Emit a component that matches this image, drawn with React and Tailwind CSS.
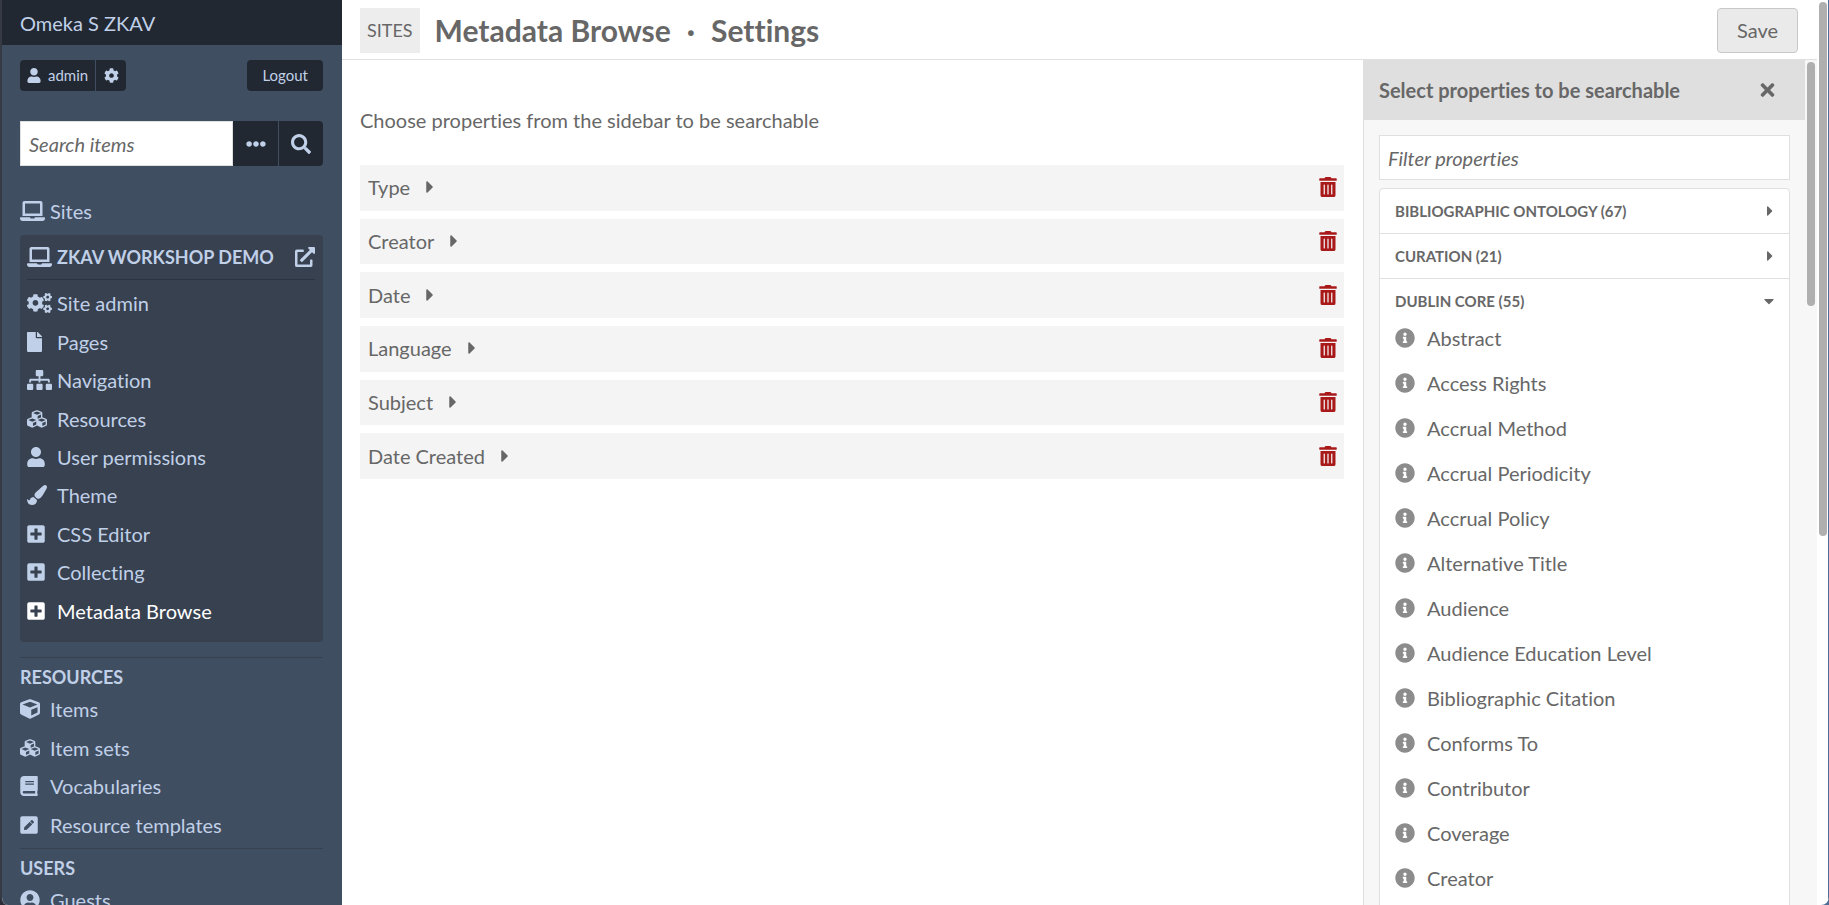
import React, { useState } from "react";
import {
  FaBook,
  FaCaretDown,
  FaCaretRight,
  FaCog,
  FaCogs,
  FaCube,
  FaCubes,
  FaEllipsisH,
  FaExternalLinkAlt,
  FaFile,
  FaInfoCircle,
  FaLaptop,
  FaPaintBrush,
  FaPenSquare,
  FaPlusSquare,
  FaSearch,
  FaSitemap,
  FaTimes,
  FaTrashAlt,
  FaUser,
  FaUserCircle,
} from "react-icons/fa";

const siteLinks = [
  { label: "Site admin", icon: FaCogs, width: "w-[25px]" },
  { label: "Pages", icon: FaFile, width: "w-[15px]" },
  { label: "Navigation", icon: FaSitemap, width: "w-[25px]" },
  { label: "Resources", icon: FaCubes, width: "w-5" },
  { label: "User permissions", icon: FaUser, width: "w-[18px]" },
  { label: "Theme", icon: FaPaintBrush, width: "w-5" },
  { label: "CSS Editor", icon: FaPlusSquare, width: "w-[18px]" },
  { label: "Collecting", icon: FaPlusSquare, width: "w-[18px]" },
  {
    label: "Metadata Browse",
    icon: FaPlusSquare,
    width: "w-[18px]",
    active: true,
  },
];

const resourceLinks = [
  { label: "Items", icon: FaCube, width: "w-5" },
  { label: "Item sets", icon: FaCubes, width: "w-5" },
  { label: "Vocabularies", icon: FaBook, width: "w-[18px]" },
  { label: "Resource templates", icon: FaPenSquare, width: "w-[18px]" },
];

const selectedProperties = [
  "Type",
  "Creator",
  "Date",
  "Language",
  "Subject",
  "Date Created",
];

const dublinCore = [
  "Abstract",
  "Access Rights",
  "Accrual Method",
  "Accrual Periodicity",
  "Accrual Policy",
  "Alternative Title",
  "Audience",
  "Audience Education Level",
  "Bibliographic Citation",
  "Conforms To",
  "Contributor",
  "Coverage",
  "Creator",
];

const vocabularies = [
  { label: "Bibliographic Ontology", count: 67, terms: [] },
  { label: "Curation", count: 21, terms: [] },
  { label: "Dublin Core", count: 55, terms: dublinCore },
];

function NavLink({ label, icon: Icon, width, active }) {
  return (
    <li className="flex flex-1 items-center">
      <a
        href="#"
        className={`flex items-center ${active ? "text-white" : ""}`}
      >
        <span className="w-[30px]">
          <Icon className={`h-5 ${width}`} />
        </span>
        {label}
      </a>
    </li>
  );
}

function Navigation() {
  return (
    <nav className="flex w-[340px] shrink-0 flex-col overflow-hidden bg-[#404e61] text-[#c0d0e8]">
      <div className="flex h-[45px] shrink-0 items-center bg-[#222831] px-[18px]">
        <a href="#">Omeka S ZKAV</a>
      </div>

      <div className="pt-[15px] pr-[19px] pl-[18px]">
        <div className="flex justify-between text-[15px] leading-[31px]">
          <div className="flex gap-px">
            <a
              href="#"
              className="flex items-center gap-[7px] rounded-l bg-[#222831] px-[7px]"
            >
              <FaUser className="h-[15px] w-[14px]" />
              admin
            </a>
            <a
              href="#"
              aria-label="Settings"
              className="flex w-[30px] items-center justify-center rounded-r bg-[#222831]"
            >
              <FaCog className="size-[15px]" />
            </a>
          </div>
          <a href="#" className="rounded bg-[#222831] px-[15px]">
            Logout
          </a>
        </div>

        <form className="mt-[30px] flex h-[45px]">
          <input
            type="text"
            aria-label="Search items"
            placeholder="Search items"
            className="min-w-0 flex-1 border border-[#dfdfdf] bg-white px-2 text-[#676767] italic placeholder:text-[#676767]"
          />
          <button
            type="button"
            aria-label="Advanced search"
            className="flex w-[46px] items-center justify-center border-r border-[#404e61] bg-[#222831]"
          >
            <FaEllipsisH className="size-5" />
          </button>
          <button
            type="button"
            aria-label="Search"
            className="flex w-11 items-center justify-center rounded-r bg-[#222831]"
          >
            <FaSearch className="size-5" />
          </button>
        </form>

        <a href="#" className="mt-[30px] flex items-center leading-[30px]">
          <span className="w-[30px]">
            <FaLaptop className="h-5 w-[25px]" />
          </span>
          Sites
        </a>

        <div className="mt-[9px] rounded bg-[#37414f] pr-2 pb-3 pl-[7px]">
          <div className="flex h-[45px] items-center border-b border-[#2b3441] text-[18px] font-bold">
            <span className="w-[30px]">
              <FaLaptop className="h-5 w-[25px]" />
            </span>
            <a href="#" className="flex-1 whitespace-nowrap uppercase">
              ZKAV Workshop Demo
            </a>
            <a href="#" aria-label="View site">
              <FaExternalLinkAlt className="size-5" />
            </a>
          </div>
          <ul className="mt-1 flex h-[346px] flex-col">
            {siteLinks.map((link) => (
              <NavLink key={link.label} {...link} />
            ))}
          </ul>
        </div>

        <h4 className="mt-[15px] border-t border-[#37414f] pt-[7px] text-[18px] leading-[25px] font-bold uppercase">
          Resources
        </h4>
        <ul className="flex h-[154px] flex-col">
          {resourceLinks.map((link) => (
            <NavLink key={link.label} {...link} />
          ))}
        </ul>

        <h4 className="mt-1 border-t border-[#37414f] pt-[7px] text-[18px] leading-[25px] font-bold uppercase">
          Users
        </h4>
        <ul className="flex h-[38px] flex-col">
          <NavLink label="Guests" icon={FaUserCircle} width="w-5" />
        </ul>
      </div>
    </nav>
  );
}

function SelectedProperty({ label }) {
  return (
    <li className="flex flex-1 items-center justify-between bg-[#f4f4f4] pr-[7px] pb-px pl-2">
      <button type="button" className="flex items-center gap-4">
        {label}
        <FaCaretRight className="h-5 w-2" />
      </button>
      <button
        type="button"
        aria-label={`Remove ${label}`}
        className="text-[#a91919]"
      >
        <FaTrashAlt className="h-5 w-[18px]" />
      </button>
    </li>
  );
}

function Vocabulary({ label, count, terms }) {
  const [open, setOpen] = useState(terms.length > 0);

  return (
    <li className="border-b border-[#dfdfdf] px-[15px] last:border-b-0">
      <button
        type="button"
        onClick={() => setOpen(!open)}
        className="flex h-11 w-full items-center justify-between text-[15px] font-bold uppercase"
      >
        {label} ({count})
        {open ? (
          <FaCaretDown className="h-4 w-[10px]" />
        ) : (
          <FaCaretRight className="h-4 w-2" />
        )}
      </button>
      {open && (
        <ul>
          {terms.map((term) => (
            <li key={term} className="flex h-[45px] gap-3 leading-[30px]">
              <FaInfoCircle className="mt-[5px] size-5 text-[#8c8c8c]" />
              {term}
            </li>
          ))}
        </ul>
      )}
    </li>
  );
}

function PropertySidebar() {
  return (
    <aside className="flex w-[454px] shrink-0 overflow-hidden border-l border-[#dfdfdf] bg-[#f7f7f7]">
      <div className="min-w-0 flex-1">
        <div className="flex h-[60px] items-center justify-between bg-[#dfdfdf] pr-[30px] pl-[15px]">
          <h3 className="font-bold">Select properties to be searchable</h3>
          <button type="button" aria-label="Close">
            <FaTimes className="h-5 w-[15px]" />
          </button>
        </div>
        <div className="p-[15px]">
          <input
            type="text"
            aria-label="Filter properties"
            placeholder="Filter properties"
            className="h-[45px] w-full border border-[#dfdfdf] bg-white px-2 italic placeholder:text-[#676767]"
          />
          <ul className="mt-2 rounded border border-[#dfdfdf] bg-white">
            {vocabularies.map((vocabulary) => (
              <Vocabulary key={vocabulary.label} {...vocabulary} />
            ))}
          </ul>
        </div>
      </div>
      <div className="w-3 p-[2px]">
        <div className="h-[244px] rounded-full bg-[#afafaf]" />
      </div>
    </aside>
  );
}

export default function App() {
  return (
    <div className="h-screen bg-linear-to-r from-[#2b2d38] to-[#4d6f96] font-[Lato,sans-serif] text-[20px] leading-[30px] text-[#676767] [font-variant-ligatures:none]">
      <div className="flex h-full overflow-hidden rounded-b-lg border-l-2 border-[#363a45] bg-white">
        <Navigation />

        <div className="flex min-w-0 flex-1 flex-col">
          <header className="flex h-[60px] shrink-0 items-center justify-between border-b border-[#dfdfdf] pt-px pr-[19px] pl-[18px]">
            <h1 className="flex items-center text-[30px] font-bold">
              <span className="mr-[15px] bg-[#ededed] px-[7px] text-[18px] leading-[45px] font-normal uppercase">
                Sites
              </span>
              Metadata Browse
              <span className="mx-4">·</span>
              Settings
            </h1>
            <button
              type="button"
              className="h-[45px] rounded border border-[#c8c8c8] bg-[#eaeaea] px-[19px]"
            >
              Save
            </button>
          </header>

          <div className="flex min-h-0 flex-1">
            <main className="flex-1 pr-[19px] pl-[18px]">
              <p className="mt-[45px]">
                Choose properties from the sidebar to be searchable
              </p>
              <ul className="mt-[30px] flex h-[314px] flex-col gap-2">
                {selectedProperties.map((property) => (
                  <SelectedProperty key={property} label={property} />
                ))}
              </ul>
            </main>
            <PropertySidebar />
          </div>
        </div>

        <div className="w-3 border-r border-[#4d6f96] py-[2px] pr-px pl-[2px]">
          <div className="h-[534px] rounded-full bg-[#afafaf]" />
        </div>
      </div>
    </div>
  );
}
